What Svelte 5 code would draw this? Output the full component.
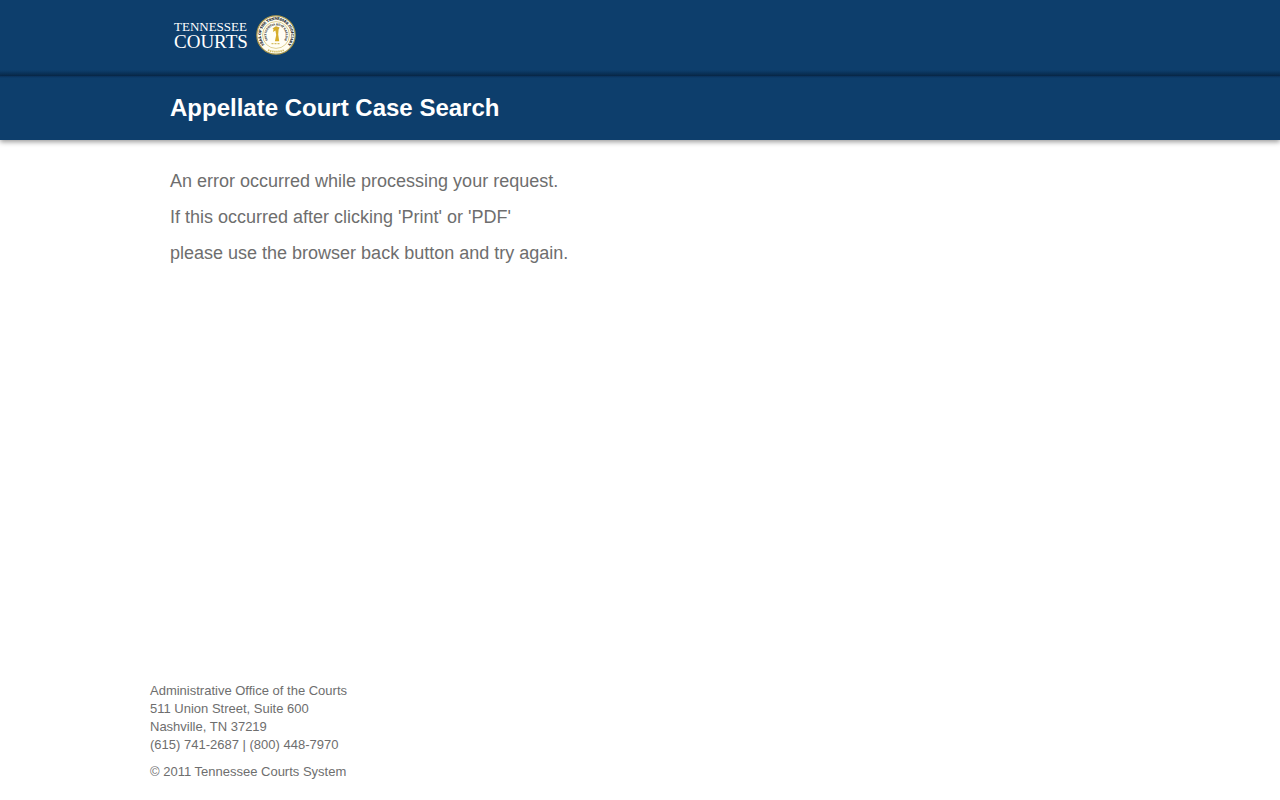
<script lang="ts">
    const messages = [
        'An error occurred while processing your request.',
        "If this occurred after clicking 'Print' or 'PDF'",
        'please use the browser back button and try again.'
    ];

    const address = [
        'Administrative Office of the Courts',
        '511 Union Street, Suite 600',
        'Nashville, TN 37219',
        '(615) 741-2687 | (800) 448-7970'
    ];
</script>

<div class="page">
    <header>
        <div class="brand">
            <div class="container inset">
                <a class="logo" href="/" aria-label="Tennessee Courts">
                    <span class="wordmark">
                        <span class="state">TENNESSEE</span>
                        <span class="courts">COURTS</span>
                    </span>
                    <svg class="seal" viewBox="0 0 40 40" aria-hidden="true">
                        <defs>
                            <path id="outer-ring" d="M10.6 32A15.2 15.2 0 1 1 29.4 32" />
                            <path id="inner-ring" d="M12.5 26.3A9.8 9.8 0 1 1 27.5 26.3" />
                        </defs>
                        <circle cx="20" cy="20" r="19.2" fill="#fffdf0" stroke="#a8954a" stroke-width="1.2" />
                        <circle cx="20" cy="20" r="13.4" fill="#fffef5" stroke="#cfba6a" stroke-width="0.7" />
                        <text font-size="3.7" font-weight="700" text-anchor="middle" fill="#10161f" stroke="#10161f" stroke-width="0.15">
                            <textPath href="#outer-ring" startOffset="50%">SEAL OF THE TENNESSEE JUDICIARY</textPath>
                        </text>
                        <text font-size="2.8" font-weight="700" text-anchor="middle" fill="#33322e" stroke="#33322e" stroke-width="0.1">
                            <textPath href="#inner-ring" startOffset="50%">FIAT JUSTITIA RUAT CAELUM</textPath>
                        </text>
                        <path d="M12 35.2Q20 38 28 35.2" fill="none" stroke="#d0b95f" stroke-width="1.8" stroke-dasharray="1.4 0.7" />
                        <path d="M16.4 13.6L20 11.2L23.6 12.6L22.6 14.4L22.2 19.5L23.2 26.2H18.9L20.2 20L19.4 15.5L17 17L17.5 14Z" fill="#d6ad2b" />
                        <path d="M15.5 28.6H24.5" fill="none" stroke="#d5bd62" stroke-width="1.2" stroke-dasharray="2 1" />
                    </svg>
                </a>
            </div>
        </div>
        <div class="title-bar">
            <div class="container inset">
                <h1>Appellate Court Case Search</h1>
            </div>
        </div>
    </header>

    <main>
        <div class="container inset">
            {#each messages as message}
                <p>{message}</p>
            {/each}
        </div>
    </main>

    <footer class="container">
        <address>
            {#each address as line}
                <div>{line}</div>
            {/each}
        </address>
        <p class="copyright">© 2011 Tennessee Courts System</p>
    </footer>
</div>

<style>
    :global(body){
        background-color: #fff;
    }
    .page{
        min-height: 100vh;
        display: flex;
        flex-direction: column;
        font-family: Arial, 'Liberation Sans', sans-serif;
        color: #6e6e6e;
    }
    .container{
        box-sizing: border-box;
        width: 100%;
        max-width: 980px;
        margin: 0 auto;
    }
    .inset{
        padding: 0 20px;
    }
    .brand{
        padding: 15px 0 21px;
        background: linear-gradient(to top, #08294b, #0d3e6c 6px);
    }
    .logo{
        display: flex;
        width: fit-content;
        gap: 8px;
        padding-left: 4px;
        color: #fff;
        text-decoration: none;
    }
    .wordmark{
        display: flex;
        flex-direction: column;
        padding-top: 5px;
        font-family: 'Liberation Serif', serif;
    }
    .state{
        font-size: 13px;
        line-height: 14px;
    }
    .courts{
        font-size: 19px;
        line-height: 16px;
    }
    .seal{
        width: 40px;
        height: 40px;
        font-family: 'Liberation Serif', serif;
    }
    .title-bar{
        padding: 16px 0;
        background: linear-gradient(#0a305a, #0d3e6c 2px);
        box-shadow: 0 2px 5px rgba(0, 0, 0, 0.4);
    }
    h1{
        margin: 0;
        font-size: 24px;
        font-weight: 700;
        line-height: 32px;
        color: #fff;
    }
    main{
        flex: 1;
        padding: 23px 0;
    }
    main p{
        margin: 0;
        font-size: 18px;
        line-height: 36px;
    }
    footer{
        padding-bottom: 19px;
        font-size: 13px;
        line-height: 18px;
    }
    address{
        font-style: normal;
    }
    .copyright{
        margin: 9px 0 0;
    }
</style>
